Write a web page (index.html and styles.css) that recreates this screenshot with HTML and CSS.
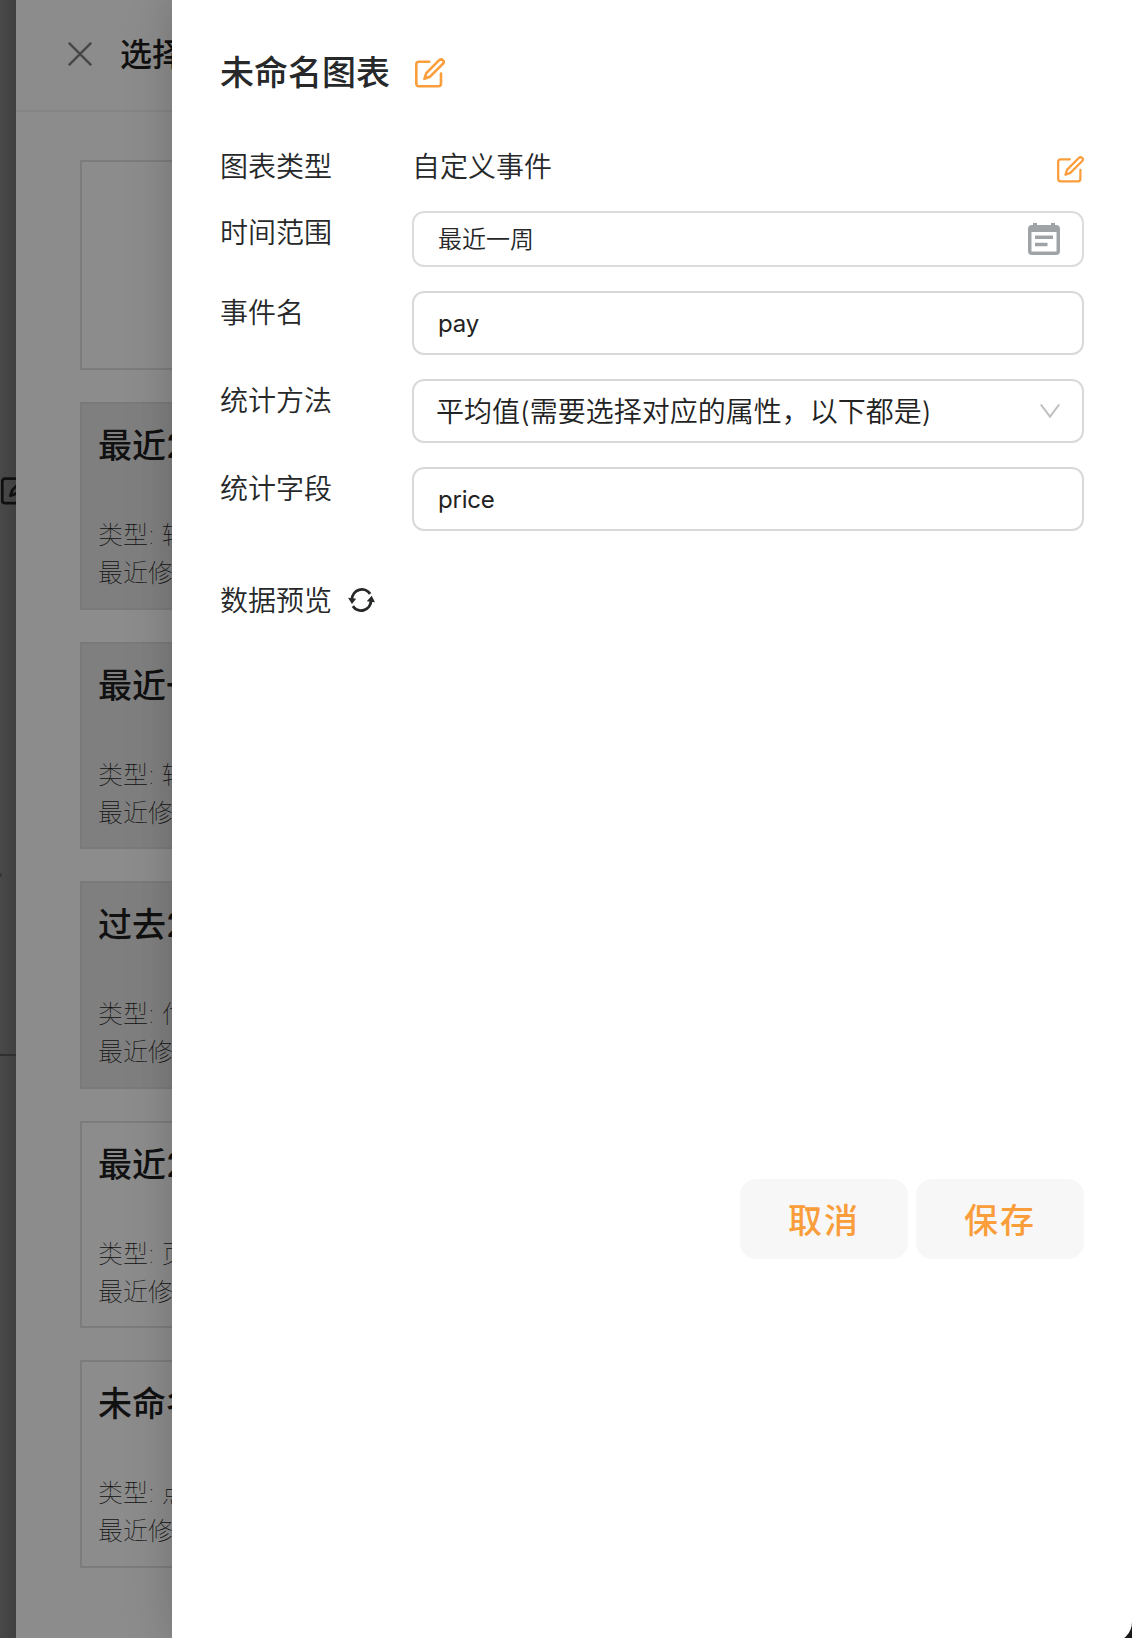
FILE: index.html
```html
<!DOCTYPE html>
<html lang="zh-CN">
<head>
<meta charset="utf-8">
<title>未命名图表</title>
<link rel="stylesheet" href="styles.css">
</head>
<body>
<svg class="defs" width="0" height="0" aria-hidden="true">
  <symbol id="edit" viewBox="0 0 30 30" fill="none" stroke="currentColor" stroke-linecap="round" stroke-linejoin="round">
    <path d="M14.3 3.7H4Q1.3 3.7 1.3 6.4V25.4Q1.3 28.2 4 28.2H23.4Q26 28.2 26 25.4V15.5"/>
    <path d="M24.2 2.2Q26 .6 27.9 2.2T27.8 5.8L14.8 18.8L9.4 20.8L11.3 15.1Z"/>
  </symbol>
</svg>
<div class="page">
  <svg class="page-edit"><use href="#edit"/></svg>
  <i class="page-dot"></i>
  <i class="page-line"></i>
</div>
<section class="drawer chooser">
  <header class="chooser-head">
    <svg class="close" viewBox="0 0 24 24"><path d="M.8 .8L23.2 23.2M23.2 .8L.8 23.2"/></svg>
    <h2>选择</h2>
  </header>
  <div class="cards">
    <div class="card blank"></div>
    <div class="card used"><h3>最近24小时</h3><p>类型: 转化</p><p>最近修改</p></div>
    <div class="card used"><h3>最近一周</h3><p>类型: 转化</p><p>最近修改</p></div>
    <div class="card used"><h3>过去24小时</h3><p>类型: 付费</p><p>最近修改</p></div>
    <div class="card"><h3>最近24小时</h3><p>类型: 页面</p><p>最近修改</p></div>
    <div class="card"><h3>未命名图表</h3><p>类型: 点击</p><p>最近修改</p></div>
  </div>
</section>
<div class="corner"></div>
<section class="drawer editor">
  <header class="editor-head"><h1>未命名图表</h1><svg class="edit-lg"><use href="#edit"/></svg></header>
  <div class="form">
    <div class="row"><span class="label">图表类型</span><span class="value">自定义事件</span><svg class="edit-sm"><use href="#edit"/></svg></div>
    <div class="row"><span class="label">时间范围</span>
      <div class="field date"><span>最近一周</span>
        <svg class="calendar" viewBox="0 0 32 32"><path fill-rule="evenodd" d="M5 0H9V2H23V0H27V2H28Q32 2 32 6V28Q32 32 28 32H4Q0 32 0 28V6Q0 2 4 2H5ZM3.5 9V28.5H28.5V9ZM7 12.5H25V16H7ZM7 19.7H19.5V23.2H7Z"/></svg>
      </div>
    </div>
    <div class="row"><span class="label">事件名</span><div class="field latin"><span>pay</span></div></div>
    <div class="row"><span class="label">统计方法</span>
      <div class="field select"><span>平均值(需要选择对应的属性，以下都是)</span>
        <svg class="chevron" viewBox="0 0 20 14"><path d="M.8 .5L10 12.7L19.2 .5"/></svg>
      </div>
    </div>
    <div class="row"><span class="label">统计字段</span><div class="field latin"><span>price</span></div></div>
  </div>
  <div class="preview"><span>数据预览</span>
    <svg class="refresh" viewBox="0 0 26 23"><path class="arc" d="M3.8 11A9.6 9.8 0 0 1 21.3 5.6M22.2 12A9.6 9.8 0 0 1 4.7 17.4"/><path d="M0 9.3L7.9 10.2L3.8 15.3ZM26 13.7L18.1 12.8L22.8 7.5Z"/></svg>
  </div>
  <footer class="actions"><button>取消</button><button>保存</button></footer>
</section>
</body>
</html>
```
FILE: styles.css
```css
* { box-sizing: border-box; }
body {
  margin: 0;
  height: 1638px;
  position: relative;
  overflow: hidden;
  font-family: Inter, "Noto Sans CJK SC", sans-serif;
  color: #262829;
}
h1, h2, h3, p { margin: 0; font-weight: 500; white-space: nowrap; }
svg { display: block; flex: none; }
.defs { position: absolute; }

.page { position: absolute; inset: 0; background: linear-gradient(90deg, #494949, #404040 16px); }
.page-edit { position: absolute; left: 1px; top: 475px; width: 30px; height: 30px; color: #101010; stroke-width: 2.7; }
.page-dot { position: absolute; left: -2px; top: 873px; width: 4px; height: 4px; border-radius: 2px; background: #353535; }
.page-line { position: absolute; left: 0; top: 1054px; width: 16px; height: 2px; background: #303030; }

.drawer { position: absolute; top: 0; bottom: 0; right: 0; }
.chooser { left: 16px; background: #8c8c8c; color: #111; }
.chooser-head {
  display: flex;
  align-items: center;
  gap: 28px;
  height: 112px;
  padding: 0 0 2px 52px;
  border-bottom: 2px solid #848484;
}
.close { width: 24px; height: 24px; fill: none; stroke: #484848; stroke-width: 2.5; }
.chooser h2 { font-size: 32px; line-height: 44px; padding-top: 2px; }
.cards { display: flex; flex-direction: column; gap: 32px; padding: 48px 64px; }
.card { height: 207.6px; padding: 18px 16px 0; border: 2px solid #7c7c7c; }
.card.blank { height: 210px; }
.card.used { background: #7f7f7f; border-color: #7a7a7a; }
.card h3 { font-size: 34px; line-height: 48px; margin-bottom: 46px; }
.card p { font-size: 25px; line-height: 38px; font-weight: 100; }

.corner { position: absolute; right: 0; bottom: 0; width: 20px; height: 20px; background: #1b1b1b; }
.editor {
  left: 172px;
  bottom: -4px;
  padding: 49px 48px 0;
  background: #fff;
  border-bottom-right-radius: 20px;
  box-shadow: -8px 0 26px rgba(0, 0, 0, .08), 0 0 60px rgba(0, 0, 0, .08);
}
.editor-head { display: flex; align-items: center; gap: 25px; height: 48px; }
.editor-head h1 { font-size: 34px; line-height: 48px; }
.edit-lg { width: 30px; height: 30px; margin-bottom: 1px; color: #fa9d3b; stroke-width: 2.6; }
.form { display: flex; flex-direction: column; gap: 24px; margin-top: 48px; font-size: 28px; line-height: 42px; font-weight: 350; }
.row { display: flex; align-items: flex-start; }
.label { flex: none; width: 192px; padding-top: 1px; margin-bottom: -1px; }
.value { flex: 1; padding-top: 1px; margin-bottom: -1px; }
.edit-sm { align-self: flex-end; width: 27px; height: 27px; margin-bottom: 4px; color: #fa9d3b; stroke-width: 2.5; }
.field {
  display: flex;
  flex: 1;
  align-items: center;
  justify-content: space-between;
  height: 64px;
  padding: 0 22px;
  border: 2px solid #d9d9d9;
  border-radius: 12px;
  color: #222;
}
.field span { padding-top: 2px; }
.field.date { height: 56px; font-size: 24px; padding-left: 24px; color: #262829; border-color: #dcdcdc; }
.field.latin { font-size: 24px; padding-left: 24px; font-weight: 400; letter-spacing: -.2px; }
.calendar { width: 32px; height: 32px; fill: #a0a3a6; }
.chevron { width: 20px; height: 14px; fill: none; stroke: #bfbfbf; stroke-width: 2; }
.preview { display: flex; align-items: center; gap: 16px; margin-top: 48px; font-size: 28px; line-height: 42px; font-weight: 350; }
.preview span { padding-top: 1px; margin-bottom: -1px; }
.refresh { width: 27px; height: 24px; fill: #262829; }
.refresh .arc { fill: none; stroke: #262829; stroke-width: 2.8; }
.actions { display: flex; justify-content: flex-end; gap: 8px; margin-top: 558px; }
.actions button {
  width: 168px;
  height: 80px;
  padding: 3px 0 0;
  border: 0;
  border-radius: 16px;
  background: #f7f7f7;
  color: #fa9d3b;
  font: 500 34px/48px Inter, "Noto Sans CJK SC", sans-serif;
  letter-spacing: 2px;
}
```
